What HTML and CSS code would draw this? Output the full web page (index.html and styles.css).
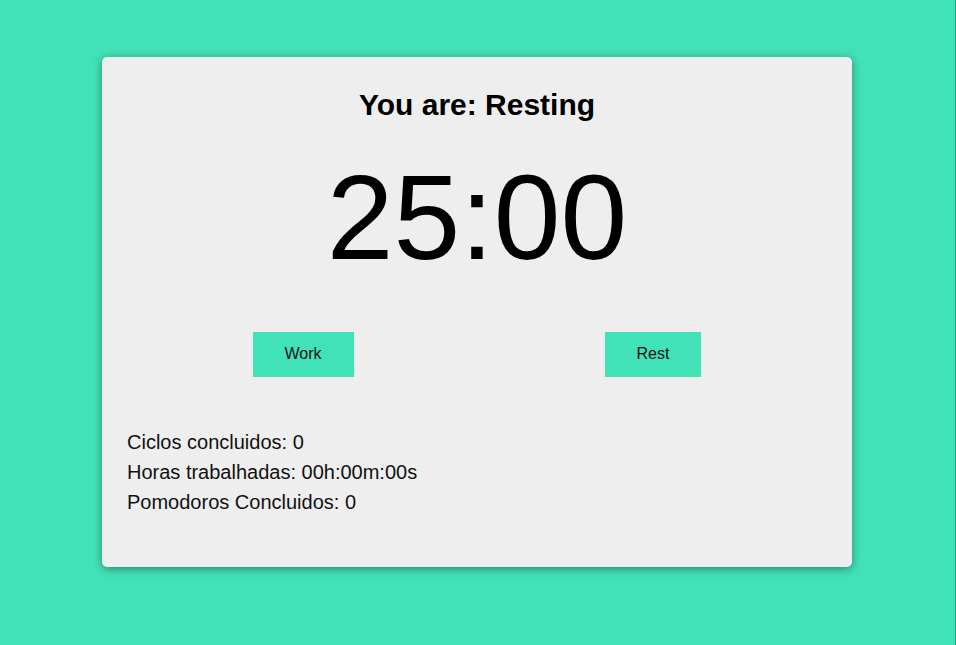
FILE: index.html
```html
<!DOCTYPE html>
<html lang="pt">
<head>
<meta charset="utf-8">
<title>Pomodoro</title>
<link rel="stylesheet" href="styles.css">
</head>
<body>
<div class="page">
  <main class="card">
    <h1 class="status">You are: Resting</h1>
    <div class="timer">25:00</div>
    <div class="controls">
      <button class="btn">Work</button>
      <button class="btn">Rest</button>
    </div>
    <div class="stats">
      <p>Ciclos concluidos: 0</p>
      <p>Horas trabalhadas: 00h:00m:00s</p>
      <p>Pomodoros Concluidos: 0</p>
    </div>
  </main>
</div>
</body>
</html>
```
FILE: styles.css
```css
html, body {
  margin: 0;
  padding: 0;
}
body {
  background: #42e2b8;
  font-family: "Liberation Sans", Arial, sans-serif;
  color: #000;
}
.page {
  min-height: 645px;
  box-sizing: border-box;
  border-right: 1px solid #2e9e81;
  padding: 57px 1px 0 0;
}
.card {
  width: 750px;
  box-sizing: border-box;
  margin: 0 auto;
  background: #eeeeee;
  border-radius: 5px;
  box-shadow: 0 2px 10px rgba(0, 0, 0, 0.4);
  padding: 30px 25px 50px;
  display: flex;
  flex-direction: column;
}
.status {
  margin: 0;
  font-size: 30px;
  line-height: 36px;
  font-weight: bold;
  text-align: center;
}
.timer {
  margin-top: 34px;
  font-size: 120px;
  line-height: 120px;
  text-align: center;
}
.controls {
  margin-top: 55px;
  display: flex;
  justify-content: space-around;
}
.btn {
  height: 45px;
  padding: 0 32px 2px;
  border: none;
  background: #42e2b8;
  font-family: "Liberation Sans", Arial, sans-serif;
  font-size: 16px;
  color: #111;
}
.stats {
  margin-top: 50px;
  font-size: 20px;
  line-height: 30px;
  color: #111;
}
.stats p {
  margin: 0;
}
```
